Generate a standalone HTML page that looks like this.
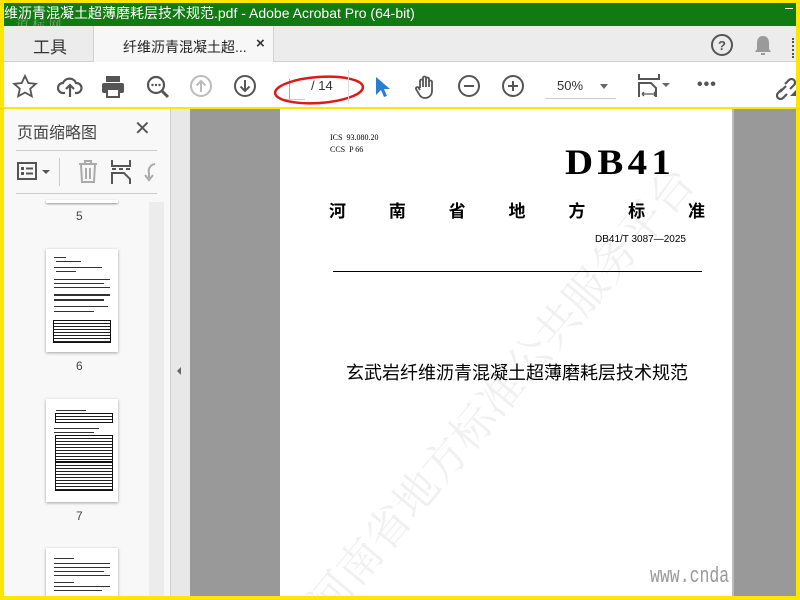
<!DOCTYPE html>
<html><head><meta charset="utf-8"><style>
*{margin:0;padding:0;box-sizing:border-box}
body{width:800px;height:600px;overflow:hidden;background:#ffe600;position:relative;font-family:"Liberation Sans","Noto Sans CJK SC",sans-serif}
.a{position:absolute}
.title{left:4px;top:3px;width:792px;height:23px;background:#117a12;color:#fff;font-size:14px;line-height:20px;white-space:nowrap;overflow:hidden}
.tabs{left:4px;top:26px;width:792px;height:36px;background:#ececec;border-bottom:1px solid #d0d0d0}
.tool{left:4px;top:62px;width:792px;height:46px;background:#fff;border-bottom:1px solid #d4d4d4}
.ic{position:absolute;top:74px}
.left{left:4px;top:109px;width:166px;height:487px;background:#f8f8f8;overflow:hidden}
.thumb{position:absolute;left:42px;width:72px;height:103px;background:#fff;box-shadow:0 1px 3px rgba(0,0,0,.35)}
.ln{position:absolute;height:1px;background:#333}
.lab{position:absolute;left:72px;font-size:12px;color:#444}
</style></head><body>
<div class="a title">&#32500;沥青混凝土超薄磨耗层技术规范.pdf - Adobe Acrobat Pro (64-bit)</div>
<div class="a" style="left:16px;top:14px;color:rgba(200,200,200,.55);font-size:13px;font-family:'Noto Serif CJK SC',serif">道 标 网</div>
<div class="a" style="left:785px;top:8px;width:8px;height:1px;background:#fff"></div>
<div class="a tabs"></div>
<div class="a" style="left:93px;top:26px;width:181px;height:37px;background:#f7f7f7;border-left:1px solid #d0d0d0;border-right:1px solid #d0d0d0"></div>
<div class="a" style="left:33px;top:33px;font-size:17px;color:#333">工具</div>
<div class="a" style="left:123px;top:37px;font-size:14px;color:#222">纤维沥青混凝土超...</div>
<div class="a" style="left:256px;top:35px;font-size:15px;color:#333;font-weight:bold">×</div>
<svg class="a" style="left:710px;top:33px" width="24" height="24"><circle cx="12" cy="12" r="10" fill="none" stroke="#555" stroke-width="2"/><text x="12" y="17" font-size="13" font-weight="bold" text-anchor="middle" fill="#555" font-family="Liberation Sans">?</text></svg>
<svg class="a" style="left:752px;top:33px" width="22" height="24"><path d="M11 3c-4 0-6 3-6 7v6l-2 3h16l-2-3v-6c0-4-2-7-6-7z" fill="#9a9a9a"/><rect x="9" y="20" width="4" height="2" fill="#9a9a9a"/></svg>
<div class="a" style="left:792px;top:38px;width:2px;height:20px;border-left:2px dotted #555"></div>
<div class="a tool"></div>
<svg class="ic" style="left:12px" width="26" height="26"><path d="M13 2l3.3 7 7.5.8-5.6 5 1.6 7.5L13 18.5 6.2 22.3l1.6-7.5-5.6-5 7.5-.8z" fill="none" stroke="#555" stroke-width="1.8"/></svg>
<svg class="ic" style="left:57px" width="26" height="26"><path d="M8 19H6a5 5 0 0 1 0-10 7 7 0 0 1 13 0 5 5 0 0 1 1 10h-2" fill="none" stroke="#555" stroke-width="2.2"/><path d="M13 23V11M9 15l4-4 4 4" fill="none" stroke="#555" stroke-width="2.2"/></svg>
<svg class="ic" style="left:100px" width="26" height="26"><rect x="6" y="2" width="14" height="6" fill="#555"/><rect x="2" y="9" width="22" height="10" rx="2" fill="#555"/><rect x="7" y="15" width="12" height="8" fill="#fff" stroke="#555" stroke-width="2"/></svg>
<svg class="ic" style="left:145px" width="26" height="26"><circle cx="11" cy="11" r="8" fill="none" stroke="#555" stroke-width="2.2"/><path d="M17 17l6 6" stroke="#555" stroke-width="3"/><circle cx="7.5" cy="11" r="1.2" fill="#555"/><circle cx="11" cy="11" r="1.2" fill="#555"/><circle cx="14.5" cy="11" r="1.2" fill="#555"/></svg>
<svg class="ic" style="left:189px" width="26" height="26"><circle cx="12" cy="12" r="10" fill="none" stroke="#bbb" stroke-width="2"/><path d="M12 18V7M7.5 11.5 12 7l4.5 4.5" fill="none" stroke="#bbb" stroke-width="2"/></svg>
<svg class="ic" style="left:233px" width="26" height="26"><circle cx="12" cy="12" r="10" fill="none" stroke="#555" stroke-width="2"/><path d="M12 6v11M7.5 12.5 12 17l4.5-4.5" fill="none" stroke="#555" stroke-width="2"/></svg>
<div class="a" style="left:289px;top:79px;width:1px;height:21px;background:#aaa"></div>
<div class="a" style="left:283px;top:99px;width:22px;height:1px;background:#ccc"></div>
<div class="a" style="left:311px;top:78px;font-size:13px;color:#333">/ 14</div>
<svg class="a" style="left:272px;top:70px" width="96" height="40"><ellipse cx="47" cy="20" rx="44" ry="13" fill="none" stroke="#e01818" stroke-width="2.5" transform="rotate(-4 47 20)"/></svg>
<div class="a" style="left:348px;top:70px;width:1px;height:34px;background:#ddd"></div>
<svg class="ic" style="left:374px;top:75px" width="16" height="24"><path d="M2 2v18l5-5 3 7 3-1-3-7h6z" fill="#2a7dd1"/></svg>
<svg class="ic" style="left:413px" width="26" height="26"><path d="M7 14V7a1.5 1.5 0 0 1 3 0v6V4a1.5 1.5 0 0 1 3 0v9V5a1.5 1.5 0 0 1 3 0v8V8a1.5 1.5 0 0 1 3 0v9c0 4-3 7-7 7-3 0-5-2-6-4l-3-5a1.5 1.5 0 0 1 2.5-1.5L7 16" fill="none" stroke="#555" stroke-width="1.8"/></svg>
<svg class="ic" style="left:457px" width="26" height="26"><circle cx="12" cy="12" r="10" fill="none" stroke="#555" stroke-width="2"/><path d="M7 12h10" stroke="#555" stroke-width="2"/></svg>
<svg class="ic" style="left:501px" width="26" height="26"><circle cx="12" cy="12" r="10" fill="none" stroke="#555" stroke-width="2"/><path d="M7 12h10M12 7v10" stroke="#555" stroke-width="2"/></svg>
<div class="a" style="left:557px;top:78px;font-size:13px;color:#333">50%</div>
<div class="a" style="left:600px;top:84px;border:4px solid transparent;border-top:5px solid #666"></div>
<div class="a" style="left:545px;top:98px;width:71px;height:1px;background:#ccc"></div>
<svg class="ic" style="left:636px;top:73px" width="36" height="26"><path d="M3 1v5h20V1" fill="none" stroke="#555" stroke-width="2"/><path d="M3 24V10h12l5 5v9" fill="none" stroke="#555" stroke-width="2"/><path d="M6 21h14M6 21l2-2M6 21l2 2M20 21l-2-2M20 21l-2 2" stroke="#555" stroke-width="1.3"/><path d="M26 10l4 4 4-4z" fill="#666"/></svg>
<div class="a" style="left:697px;top:76px;font-size:16px;color:#555;letter-spacing:1px;font-weight:bold">•••</div>
<svg class="ic" style="left:776px" width="22" height="26"><path d="M4 18l6-6M9 10l4-4a3 3 0 0 1 5 5l-4 4M11 20l-4 4a3 3 0 0 1-5-5l4-4" fill="none" stroke="#555" stroke-width="2.2"/><path d="M14 22l6-6v6z" fill="#555"/></svg>
<!-- left panel -->
<div class="a left">
<div class="a" style="left:13px;top:10px;font-size:16px;color:#444">页面缩略图</div>
<div class="a" style="left:130px;top:7px;font-size:20px;color:#555">✕</div>
<div class="a" style="left:12px;top:41px;width:141px;height:1px;background:#ccc"></div>
<svg class="a" style="left:13px;top:52px" width="22" height="22"><rect x="1" y="2" width="18" height="16" fill="none" stroke="#555" stroke-width="2"/><rect x="4" y="6" width="3" height="3" fill="#555"/><rect x="4" y="11" width="3" height="3" fill="#555"/><path d="M9 7.5h7M9 12.5h7" stroke="#555" stroke-width="2"/></svg>
<div class="a" style="left:38px;top:61px;border:4px solid transparent;border-top:4px solid #555"></div>
<div class="a" style="left:55px;top:49px;width:1px;height:28px;background:#ccc"></div>
<svg class="a" style="left:73px;top:50px" width="22" height="26"><path d="M2 5h18M8 5V2h6v3M4 5l1 18h12l1-18M9 9v11M13 9v11" fill="none" stroke="#aaa" stroke-width="2"/></svg>
<svg class="a" style="left:106px;top:50px" width="22" height="26"><path d="M2 1v6h18V1" fill="none" stroke="#555" stroke-width="2"/><path d="M2 10h4M9 10h4M16 10h4" stroke="#555" stroke-width="2"/><path d="M2 25V14h12l6 6v5" fill="none" stroke="#555" stroke-width="2"/></svg>
<svg class="a" style="left:139px;top:52px" width="14" height="24"><path d="M12 3a7 7 0 0 0-6 9v5M2 14l4 5 4-5" fill="none" stroke="#aaa" stroke-width="2"/></svg>
<div class="a" style="left:12px;top:84px;width:141px;height:1px;background:#ccc"></div>
<div class="a" style="left:145px;top:93px;width:15px;height:394px;background:#ececec"></div>
<div class="a" style="left:42px;top:91px;width:72px;height:3px;background:#fff;box-shadow:0 1px 2px rgba(0,0,0,.4)"></div>
<div class="lab" style="top:100px">5</div>
<div class="thumb" style="top:140px">
<div class="ln" style="left:8px;top:8px;width:12px"></div><div class="ln" style="left:10px;top:12px;width:25px"></div><div class="ln" style="left:8px;top:18px;width:48px"></div><div class="ln" style="left:10px;top:22px;width:20px"></div><div class="ln" style="left:8px;top:30px;width:56px"></div><div class="ln" style="left:8px;top:34px;width:50px"></div><div class="ln" style="left:8px;top:38px;width:56px"></div><div class="ln" style="left:8px;top:45px;width:56px;height:2px"></div><div class="ln" style="left:8px;top:50px;width:50px;height:2px"></div><div class="ln" style="left:8px;top:57px;width:54px"></div><div class="ln" style="left:8px;top:62px;width:40px"></div>
<div style="position:absolute;left:7px;top:71px;width:58px;height:23px;border:1px solid #111;background:repeating-linear-gradient(#fff 0 2px,#222 2px 3px)"></div></div>
<div class="lab" style="top:250px">6</div>
<div class="thumb" style="top:290px">
<div class="ln" style="left:10px;top:11px;width:30px"></div>
<div style="position:absolute;left:9px;top:14px;width:58px;height:10px;border:1px solid #111;background:repeating-linear-gradient(#fff 0 2px,#222 2px 3px)"></div>
<div class="ln" style="left:8px;top:29px;width:45px"></div><div class="ln" style="left:8px;top:33px;width:40px"></div>
<div style="position:absolute;left:9px;top:36px;width:58px;height:27px;border:1px solid #111;background:repeating-linear-gradient(#fff 0 2px,#222 2px 3px)"></div>
<div style="position:absolute;left:9px;top:63px;width:58px;height:29px;border:1px solid #111;background:repeating-linear-gradient(#fff 0 2px,#222 2px 3px)"></div></div>
<div class="lab" style="top:400px">7</div>
<div class="thumb" style="top:439px;height:70px">
<div class="ln" style="left:8px;top:10px;width:20px"></div><div class="ln" style="left:8px;top:15px;width:56px"></div><div class="ln" style="left:8px;top:19px;width:56px"></div><div class="ln" style="left:8px;top:23px;width:50px"></div><div class="ln" style="left:8px;top:27px;width:56px"></div><div class="ln" style="left:8px;top:34px;width:20px"></div><div class="ln" style="left:8px;top:38px;width:56px"></div><div class="ln" style="left:8px;top:42px;width:48px"></div></div>
</div>
<!-- splitter -->
<div class="a" style="left:170px;top:109px;width:20px;height:487px;background:#e8e8e8;border-left:1px solid #d0d0d0"></div>
<div class="a" style="left:177px;top:367px;border:4px solid transparent;border-right:4px solid #666;border-left:0"></div>
<!-- doc -->
<div class="a" style="left:190px;top:109px;width:606px;height:487px;background:#999"></div>
<div class="a" style="left:280px;top:109px;width:454px;height:487px;background:#fff;overflow:hidden">
<div class="a" style="left:50px;top:23px;font-size:8px;font-family:'Liberation Serif',serif;color:#000;line-height:12px">ICS&nbsp; 93.080.20<br>CCS&nbsp; P 66</div>
<div class="a" style="left:285px;top:34px;font-size:36px;font-weight:bold;font-family:'Liberation Serif',serif;color:#000;letter-spacing:4px;line-height:38px;transform:scaleX(1.08);transform-origin:0 0">DB41</div>
<div class="a" style="left:49px;top:88px;width:376px;display:flex;justify-content:space-between;font-size:17px;font-weight:bold;font-family:'Noto Sans CJK SC',sans-serif;color:#000"><span>河</span><span>南</span><span>省</span><span>地</span><span>方</span><span>标</span><span>准</span></div>
<div class="a" style="left:315px;top:125px;font-size:10px;color:#000">DB41/T 3087—2025</div>
<div class="a" style="left:53px;top:162px;width:369px;height:1px;background:#000"></div>
<div class="a" style="left:66px;top:250px;font-size:18px;font-family:'Noto Sans CJK SC',sans-serif;color:#000">玄武岩纤维沥青混凝土超薄磨耗层技术规范</div>
<div class="a" style="left:10px;font-size:44px;color:rgba(0,0,0,.06);font-family:'Noto Serif CJK SC',serif;transform:rotate(-50deg);transform-origin:0 0;white-space:nowrap;top:480px">河南省地方标准公共服务平台</div>
<div class="a" style="left:370px;top:455px;font-size:22px;color:#999;font-family:'Liberation Mono',monospace;transform:scaleX(.75);transform-origin:0 0">www.cnda</div>
</div>
<div class="a" style="left:732px;top:109px;width:2px;height:487px;background:#bbb"></div>
</body></html>
